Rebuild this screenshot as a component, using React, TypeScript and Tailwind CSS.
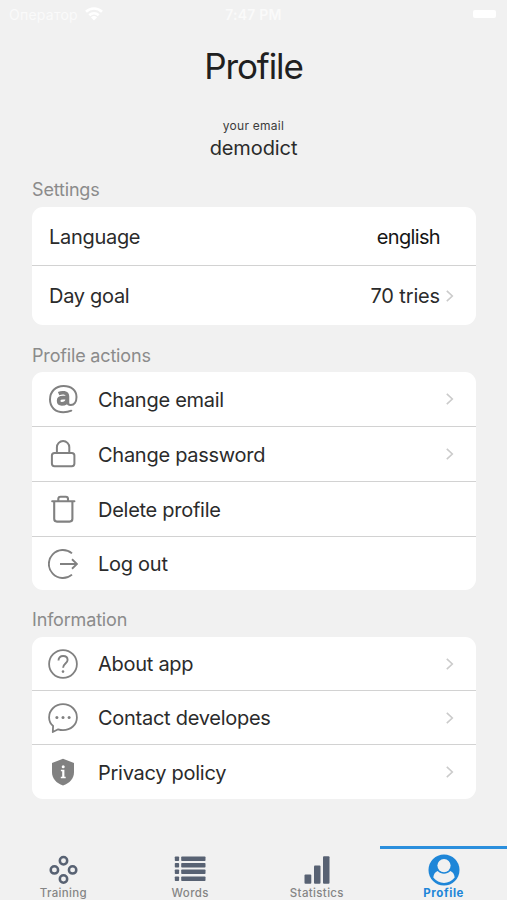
import type { ReactNode } from 'react';

function Chevron() {
  return (
    <svg width="8" height="12" viewBox="0 0 8 12" fill="none" stroke="#cbcbcb" strokeWidth="1.6">
      <path d="M.8 .9 6.300 6 .8 11.100" />
    </svg>
  );
}

function AtIcon() {
  return (
    <svg width="30" height="30" viewBox="0 0 30 30" fill="none" stroke="#818181" strokeLinecap="round">
      <path strokeWidth="2" d="M23.300 26.700C20.800 27.800 18.300 28.200 15.300 28.200 7.200 28.200 2 23 2 15.600 2 7.600 7.600 2 15.600 2 23.300 2 28.500 6.500 28.500 13c0 4.800-2.300 8-5.700 8-2.200 0-3.400-1.200-3.400-3.300" />
      <path strokeWidth="3.500" strokeLinecap="butt" d="M10.600 9.600c3.200-1.500 8.900-1.600 8.900 3V20" />
      <path strokeWidth="3.600" strokeLinecap="butt" d="M19.200 13.600h-4.200c-2.800 0-4.400 1.100-4.400 3.200 0 1.900 1.200 3.100 3.200 3.100 2.600 0 5-1.500 5.400-4" />
    </svg>
  );
}

function LockIcon() {
  return (
    <svg width="30" height="30" viewBox="0 0 30 30" fill="none" stroke="#818181" strokeWidth="2">
      <rect x="3.900" y="13.900" width="22.500" height="13.300" rx="2.600" />
      <path d="M8.900 13.800V8.300a6.200 6.200 0 0 1 12.400 0v5.500" />
    </svg>
  );
}

function TrashIcon() {
  return (
    <svg width="30" height="30" viewBox="0 0 30 30" fill="none" stroke="#818181" strokeWidth="2.100" strokeLinecap="round">
      <path d="M4.200 7.300h22.200M10.300 7V5c0-1.400.8-2.300 2.200-2.300h5.300c1.400 0 2.200.9 2.200 2.300V7M6.200 7.500v17.300c0 1.800 1 2.800 2.800 2.800h12.600c1.800 0 2.800-1 2.800-2.800V7.500" />
    </svg>
  );
}

function LogoutIcon() {
  return (
    <svg width="30" height="30" viewBox="0 0 30 30" fill="none" stroke="#818181" strokeWidth="1.900">
      <path d="M24 4.400A14 14 0 1 0 24 25.600" />
      <path d="M12 15H29M24 10.300 29 15l-5 4.700" />
    </svg>
  );
}

function HelpIcon() {
  return (
    <svg width="30" height="30" viewBox="0 0 30 30" fill="none" stroke="#818181" strokeWidth="1.800">
      <circle cx="15" cy="15" r="13.900" />
      <path strokeWidth="1.900" d="M10.500 11.400c0-2.700 1.800-4.400 4.600-4.400 2.700 0 4.500 1.500 4.500 3.900 0 3.500-4.500 3.800-4.500 7.800" />
      <circle cx="15" cy="22.600" r="1.300" fill="#818181" stroke="none" />
    </svg>
  );
}

function ChatIcon() {
  return (
    <svg width="30" height="30" viewBox="0 0 30 30" fill="none" stroke="#818181" strokeWidth="1.800" strokeLinejoin="round">
      <path d="M5.100 22.900C2.500 20.700 1.100 17.800 1.100 14.400 1.100 7 7.200 1.200 15 1.200S28.900 7 28.900 14.400s-6.100 12.700-13.900 12.700c-1.800 0-3.300-.3-4.800-.8L4.800 29Z" />
      <g fill="#818181" stroke="none">
        <circle cx="8.900" cy="14.600" r="1.500" />
        <circle cx="15" cy="14.600" r="1.500" />
        <circle cx="21.100" cy="14.600" r="1.500" />
      </g>
    </svg>
  );
}

function ShieldIcon() {
  return (
    <svg width="30" height="30" viewBox="0 0 30 30">
      <path fill="#818181" d="M15 1.700 26 5.900v9.200c0 6.600-4.200 11.200-11 13.400C8.200 26.300 4 21.700 4 15.100V5.900Z" />
      <circle cx="15.200" cy="9.700" r="1.500" fill="#fff" />
      <path fill="#fff" d="M12.900 12.800h3.500v7h1.300v1.500h-4.900v-1.500h1.400v-5.500h-1.300Z" />
    </svg>
  );
}

function Row({ icon, label, height, arrow = false, last = false }: { icon: ReactNode; label: string; height: string; arrow?: boolean; last?: boolean }) {
  return (
    <div className={`flex items-center pl-4 pr-[22px] ${height} ${last ? '' : 'border-b border-[#d2d2d2]'}`}>
      {icon}
      <span className="ml-5 grow pt-px text-[20px] tracking-[-0.270px]">{label}</span>
      {arrow && <Chevron />}
    </div>
  );
}

function Heading({ children }: { children: ReactNode }) {
  return <h2 className="text-[18px] leading-[22px] tracking-[-0.170px] text-[#8b8b8b]">{children}</h2>;
}

function TrainingIcon() {
  return (
    <svg width="30" height="30" viewBox="0 0 30 30" fill="none" stroke="#586273" strokeWidth="2.500">
      <circle cx="15.500" cy="5.800" r="3.700" />
      <circle cx="6.400" cy="14.900" r="3.700" />
      <circle cx="24.600" cy="14.900" r="3.700" />
      <circle cx="15.500" cy="24" r="3.700" />
    </svg>
  );
}

function WordsIcon() {
  return (
    <svg width="32" height="30" viewBox="0 0 32 30" fill="#586273">
      {[1.500, 8, 14.500, 21.500].map((y) => (
        <g key={y}>
          <rect x=".8" y={y} width="4.300" height="4.500" rx=".8" />
          <rect x="7.200" y={y} width="24.300" height="4.500" rx=".8" />
        </g>
      ))}
    </svg>
  );
}

function StatisticsIcon() {
  return (
    <svg width="30" height="30" viewBox="0 0 30 30" fill="#586273">
      <rect x="2.500" y="19.500" width="6.800" height="9.200" rx="1" />
      <rect x="12" y="10.500" width="6.500" height="18.200" rx="1" />
      <rect x="21" y="1.200" width="6.500" height="27.500" rx="1" />
    </svg>
  );
}

function ProfileIcon() {
  return (
    <svg width="32" height="32" viewBox="0 0 32 32">
      <circle cx="16" cy="16" r="15.500" fill="#1e86d8" />
      <circle cx="16" cy="11.600" r="6.600" fill="#f1f1f1" />
      <path fill="#f1f1f1" d="M5.300 23.500c.3-3.300 1.900-5.700 4.400-6.500 3.300 3.700 9.300 3.700 12.600 0 2.500.8 4.100 3.200 4.400 6.500-5.300 7.200-16.100 7.200-21.400 0Z" />
    </svg>
  );
}

function Tab({ icon, label, active = false }: { icon: ReactNode; label: string; active?: boolean }) {
  return (
    <div className={`flex flex-1 flex-col items-center border-t-[3px] ${active ? 'border-[#2b8fdd] text-[#1e86d8]' : 'border-transparent text-[#858585]'}`}>
      <div className="flex h-[41px] items-center pt-[3px]">{icon}</div>
      <span className={`-mt-0.5 text-[11.500px] leading-[14px] ${active ? 'font-bold tracking-[0.600px]' : 'font-medium tracking-[0.350px]'}`}>{label}</span>
    </div>
  );
}

export default function App() {
  return (
    <div className="flex h-[900px] w-[507px] flex-col overflow-hidden bg-[#f1f1f1] font-['Inter','Liberation_Sans',sans-serif] text-[#2b2b2b]">
      <header className="grid h-7 grid-cols-3 items-center pl-[9px] pr-[11px] text-[14px] text-[#fafafa]">
        <div className="flex items-center gap-[7px]">
          <span className="tracking-[0.250px]">Оператор</span>
          <svg width="18" height="14" viewBox="0 0 18 14" fill="none" stroke="#fff" strokeWidth="2.600">
            <path d="M1 4.800c4.500-4.400 11.500-4.400 16 0M4.300 8.300c2.700-2.600 6.700-2.600 9.400 0" />
            <path fill="#fff" stroke="none" d="m5.900 10.200c1.800-1.500 4.400-1.500 6.200 0L9 13.500Z" />
          </svg>
        </div>
        <span className="pl-0.5 text-center font-semibold tracking-[0.200px]">7:47 PM</span>
        <span className="h-2 w-[23px] justify-self-end rounded-xs bg-white" />
      </header>

      <h1 className="mt-4 text-center text-[35px] leading-[44px] tracking-[-1.100px] text-[#202020]">Profile</h1>
      <div className="mt-[30px] text-center text-[12px] leading-4 tracking-[0.250px] text-[#3c3c3c]">your email</div>
      <div className="text-center text-[20px] leading-7 tracking-[-0.100px]">demodict</div>

      <main className="mt-[17px] flex flex-col pl-8 pr-[31px]">
        <Heading>Settings</Heading>
        <section className="mt-[6px] overflow-hidden rounded-[11px] bg-white text-[20px]">
          <div className="flex h-[59px] items-center justify-between border-b border-[#d2d2d2] pl-[17px] pr-[36px] pt-px">
            <span className="tracking-[-0.300px]">Language</span>
            <span className="tracking-[-0.650px] text-[#161616]">english</span>
          </div>
          <div className="flex h-[59px] items-center pl-[17px] pr-[22px] pt-px">
            <span className="grow tracking-[-0.300px]">Day goal</span>
            <span className="mr-1.5 tracking-[-0.150px]">70 tries</span>
            <Chevron />
          </div>
        </section>

        <div className="mt-5"><Heading>Profile actions</Heading></div>
        <section className="mt-[5px] overflow-hidden rounded-[11px] bg-white">
          <Row icon={<AtIcon />} label="Change email" height="h-[55px]" arrow />
          <Row icon={<LockIcon />} label="Change password" height="h-[55px]" arrow />
          <Row icon={<TrashIcon />} label="Delete profile" height="h-[55px]" />
          <Row icon={<LogoutIcon />} label="Log out" height="h-[53px]" last />
        </section>

        <div className="mt-[19px]"><Heading>Information</Heading></div>
        <section className="mt-[6px] overflow-hidden rounded-[11px] bg-white">
          <Row icon={<HelpIcon />} label="About app" height="h-[54px]" arrow />
          <Row icon={<ChatIcon />} label="Contact developes" height="h-[54px]" arrow />
          <Row icon={<ShieldIcon />} label="Privacy policy" height="h-[54px]" arrow last />
        </section>
      </main>

      <nav className="mt-auto flex h-[54px]">
        <Tab icon={<TrainingIcon />} label="Training" />
        <Tab icon={<WordsIcon />} label="Words" />
        <Tab icon={<StatisticsIcon />} label="Statistics" />
        <Tab icon={<ProfileIcon />} label="Profile" active />
      </nav>
    </div>
  );
}
